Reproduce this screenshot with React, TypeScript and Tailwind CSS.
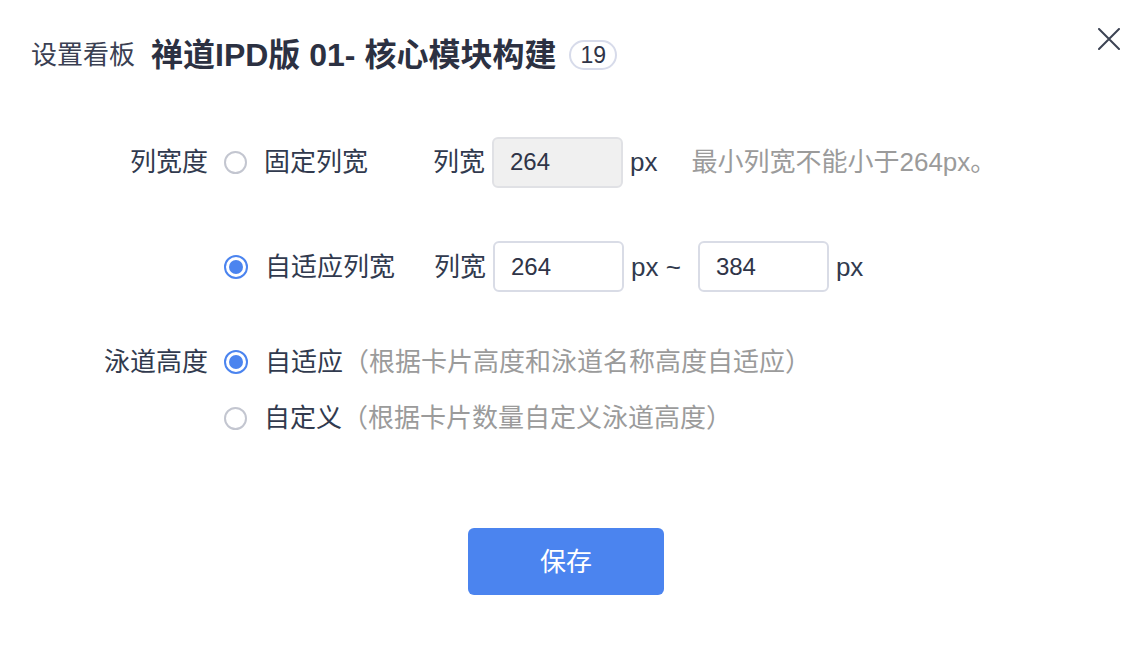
import React from 'react';

const font = { fontFamily: '"Liberation Sans", "Noto Sans CJK SC", sans-serif' };

const Radio: React.FC<{ checked?: boolean }> = ({ checked }) =>
  checked ? (
    <span className="block w-[24px] h-[24px] rounded-full border-[2px] border-[#4b84ef] flex items-center justify-center shrink-0">
      <span className="block w-[14px] h-[14px] rounded-full bg-[#4b84ef]" />
    </span>
  ) : (
    <span className="block w-[23px] h-[23px] rounded-full border-[2px] border-[#c3c6d0] bg-white shrink-0" />
  );

const WidthInput: React.FC<{ value: string; disabled?: boolean }> = ({ value, disabled }) => (
  <div
    className={`w-[131px] h-[51px] rounded-[6px] border-[2px] flex items-center pl-[16px] text-[24px] text-[#2f3447] ${
      disabled ? 'bg-[#f0f0f0] border-[#e0e1e5]' : 'bg-white border-[#d9dce6]'
    }`}
  >
    {value}
  </div>
);

export default function App() {
  return (
    <div className="w-[1148px] h-[666px] bg-white relative pt-[34px] text-[#313a4e] overflow-hidden" style={font}>
      {/* Header */}
      <div className="flex items-center h-[42px] pl-[31px]">
        <span className="text-[26px] leading-none text-[#3a4052]">设置看板</span>
        <span className="ml-[16px] text-[32px] font-bold leading-none text-[#2c3142]">禅道IPD版 01- 核心模块构建</span>
        <span className="ml-[13px] h-[30px] px-[9px] rounded-full border-[2px] border-[#d7dbea] flex items-center text-[23px] leading-none text-[#2f3447]">
          19
        </span>
      </div>
      <button className="absolute top-[28px] right-[28px] w-[22px] h-[22px]">
        <svg viewBox="0 0 22 22" className="w-[22px] h-[22px]">
          <path d="M1 1L21 21M21 1L1 21" stroke="#3c4353" strokeWidth="2" strokeLinecap="round" />
        </svg>
      </button>

      {/* Column width */}
      <div className="flex items-center h-[52px] mt-[60px] text-[26px] leading-none">
        <span className="w-[208px] text-right">列宽度</span>
        <span className="ml-[16px]"><Radio /></span>
        <span className="ml-[17px] w-[169px]">固定列宽</span>
        <span>列宽</span>
        <span className="ml-[7px]"><WidthInput value="264" disabled /></span>
        <span className="ml-[7px]">px</span>
        <span className="ml-[34px] text-[#9b9b9b]">最小列宽不能小于264px。</span>
      </div>

      <div className="flex items-center h-[51px] mt-[53px] text-[26px] leading-none">
        <span className="w-[208px]" />
        <span className="ml-[16px]"><Radio checked /></span>
        <span className="ml-[17px] w-[169px]">自适应列宽</span>
        <span>列宽</span>
        <span className="ml-[7px]"><WidthInput value="264" /></span>
        <span className="ml-[7px]">px ~</span>
        <span className="ml-[17px]"><WidthInput value="384" /></span>
        <span className="ml-[7px]">px</span>
      </div>

      {/* Lane height */}
      <div className="flex items-center h-[52px] mt-[44px] text-[26px] leading-none">
        <span className="w-[208px] text-right">泳道高度</span>
        <span className="ml-[16px]"><Radio checked /></span>
        <span className="ml-[17px]">自适应</span>
        <span className="text-[#9b9b9b]">（根据卡片高度和泳道名称高度自适应）</span>
      </div>
      <div className="flex items-center h-[52px] mt-[4px] text-[26px] leading-none">
        <span className="w-[208px]" />
        <span className="ml-[16px]"><Radio /></span>
        <span className="ml-[17px]">自定义</span>
        <span className="text-[#9b9b9b]">（根据卡片数量自定义泳道高度）</span>
      </div>

      <div className="mt-[84px] pl-[468px]">
        <button className="w-[196px] h-[67px] rounded-[6px] bg-[#4b84ef] text-white text-[26px] leading-none">
          保存
        </button>
      </div>
    </div>
  );
}
